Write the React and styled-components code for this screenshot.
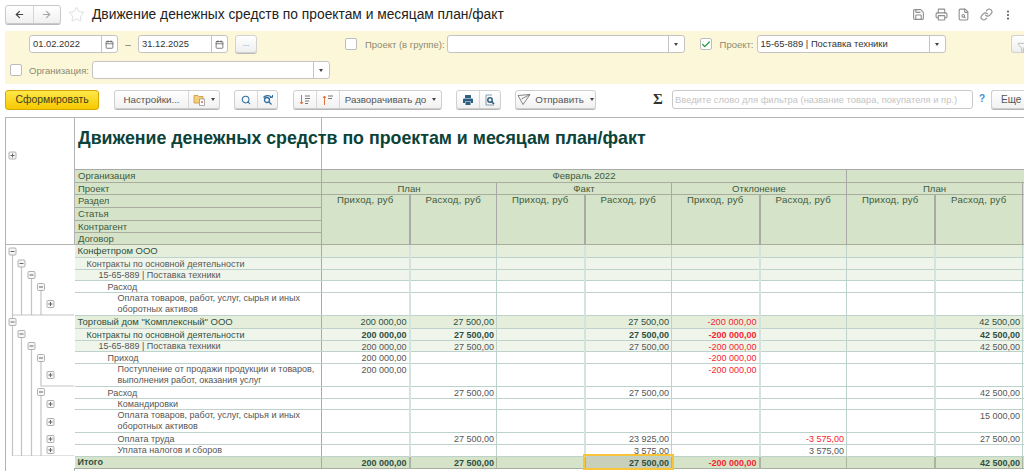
import React from "react"
import styled, { createGlobalStyle } from "styled-components"
import { ArrowLeft, ArrowRight, Star, Save, Printer, FileSearch, Link, MoreVertical, Calendar, Check, Filter, Search } from "lucide-react"

const GlobalStyle = createGlobalStyle`
    html, body {
        margin: 0;
        padding: 0;
        width: 1024px;
        height: 471px;
        overflow: hidden;
        background: #fff;
        font-family: "Liberation Sans", Arial, sans-serif;
        color: #4a4a4a;
    }
`

const Page = styled.div`
    width: 1024px;
    height: 471px;
    overflow: hidden;
    display: flex;
    flex-direction: column;
`

// top line with back/forward and the title
const TitleBar = styled.div`
    height: 31px;
    flex: none;
    display: flex;
    align-items: center;
    padding: 0 10px 2px 5px;
    box-sizing: border-box;
`
const NavGroup = styled.div`
    display: flex;
    width: 54px;
    height: 17px;
    border: 1px solid #c9c9c9;
    border-radius: 3px;
    background: linear-gradient(#fff, #f0f0f0);
    box-shadow: 0 1px 0 #bbb;
    flex: none;
`
const NavCell = styled.div`
    flex: 1;
    display: flex;
    align-items: center;
    justify-content: center;
    color: ${p => (p.$off ? "#a8a8a8" : "#444")};
    & + & { border-left: 1px solid #d4d4d4; }
`
const StarBox = styled.div`
    margin: 0 7px 0 7px;
    display: flex;
    color: #cfcfcf;
`
const PageTitle = styled.h1`
    margin: 0;
    font-size: 13.8px;
    font-weight: 400;
    color: #222;
    white-space: nowrap;
    flex: 1;
`
const TopIcons = styled.div`
    display: flex;
    gap: 9.500px;
    color: #8d8d8d;
    align-items: center;
`

// yellow filter panel
const FilterPanel = styled.div`
    height: 53px;
    flex: none;
    margin-left: 5px;
    background: #fdf7d9;
    box-sizing: border-box;
    padding: 4px 0 0 5px;
    display: flex;
    flex-direction: column;
    gap: 8px;
    overflow: hidden;
`
const FilterRow = styled.div`
    display: flex;
    align-items: center;
    height: 18px;
`
const Field = styled.div`
    width: ${p => p.$w}px;
    margin-left: ${p => p.$ml || 0}px;
    height: 18px;
    flex: none;
    box-sizing: border-box;
    display: flex;
    background: #fff;
    border: 1px solid #c4c4c4;
    border-radius: 3px;
    font-size: 9.400px;
    line-height: 16px;
    color: #333;
`
const FieldText = styled.div`
    flex: 1;
    padding-left: 3px;
    white-space: nowrap;
    overflow: hidden;
`
const FieldBtn = styled.div`
    width: 15px;
    flex: none;
    border-left: 1px solid #c4c4c4;
    display: flex;
    align-items: center;
    justify-content: center;
    color: #555;
`
const Caret = styled.span`
    width: 0;
    height: 0;
    border-left: 2.500px solid transparent;
    border-right: 2.500px solid transparent;
    border-top: 3px solid #444;
    margin-left: ${p => p.$ml || 0}px;
`
const CheckBox = styled.div`
    width: 12px;
    height: 12px;
    box-sizing: border-box;
    flex: none;
    margin-left: ${p => p.$ml || 0}px;
    border: 1px solid #bdbdbd;
    border-radius: 2px;
    background: #fff;
    display: flex;
    align-items: center;
    justify-content: center;
    color: #1f9a3c;
`
const FieldLabel = styled.div`
    font-size: 9.500px;
    color: #8a8a72;
    white-space: nowrap;
    margin: 0 2px 0 ${p => p.$ml || 8}px;
`
const Dash = styled.div`
    width: 20px;
    flex: none;
    text-align: center;
    font-size: 10px;
    color: #777;
`
const DotsBtn = styled.div`
    width: 22px;
    height: 18px;
    flex: none;
    margin-left: 7px;
    box-sizing: border-box;
    border: 1px solid #d2d2d2;
    border-radius: 3px;
    background: linear-gradient(#fff, #efefef);
    box-shadow: 0 1px 0 #bbb;
    font-size: 8px;
    line-height: 16px;
    text-align: center;
    color: #777;
`
const FunnelBtn = styled.div`
    width: 20px;
    height: 18px;
    flex: none;
    margin-left: 65px;
    box-sizing: border-box;
    border: 1px solid #d2d2d2;
    border-right: none;
    border-radius: 3px 0 0 3px;
    background: linear-gradient(#fff, #efefef);
    padding: 3px 0 0 5px;
    color: #b9b9b9;
`

// command bar
const Toolbar = styled.div`
    height: 20px;
    flex: none;
    margin-top: 6px;
    padding-left: 5px;
    display: flex;
    align-items: stretch;
`
const MainBtn = styled.div`
    width: 94px;
    box-sizing: border-box;
    border: 1px solid #d4a900;
    border-radius: 3px;
    background: linear-gradient(#ffe84a, #f6c800);
    font-size: 10.400px;
    line-height: 18px;
    text-align: center;
    color: #3d3d1a;
    flex: none;
`
const BtnGroup = styled.div`
    display: flex;
    flex: none;
    width: ${p => p.$w}px;
    margin-left: ${p => p.$ml}px;
    box-sizing: border-box;
    border: 1px solid #cfcfcf;
    border-radius: 3px;
    background: linear-gradient(#fff, #f1f1f1);
    box-shadow: 0 1px 0 #b5b5b5;
    height: 19px;
`
const BtnCell = styled.div`
    width: ${p => (p.$w ? p.$w + "px" : "auto")};
    flex: ${p => (p.$w ? "none" : 1)};
    display: flex;
    align-items: center;
    justify-content: center;
    gap: 4px;
    font-size: 9.800px;
    color: ${p => p.$ink || "#555"};
    white-space: nowrap;
    & + & { border-left: 1px solid #d8d8d8; }
`
const SigmaMark = styled.div`
    margin-left: 57px;
    width: 19px;
    flex: none;
    font-family: "Liberation Serif", serif;
    font-weight: 700;
    font-size: 15px;
    line-height: 19px;
    color: #333;
`
const SearchField = styled.div`
    width: 301px;
    height: 19px;
    flex: none;
    box-sizing: border-box;
    border: 1px solid #c9c9c9;
    border-radius: 3px;
    font-size: 9.400px;
    line-height: 17px;
    padding-left: 2px;
    color: #c4c4c4;
    white-space: nowrap;
    overflow: hidden;
`
const HelpMark = styled.div`
    width: 18px;
    flex: none;
    text-align: center;
    font-size: 10px;
    font-weight: 700;
    line-height: 18px;
    color: #3b8fd0;
`
const MoreBtn = styled.div`
    flex: none;
    width: 40px;
    height: 19px;
    box-sizing: border-box;
    border: 1px solid #cfcfcf;
    border-right: none;
    border-radius: 3px 0 0 3px;
    background: linear-gradient(#fff, #f1f1f1);
    box-shadow: 0 1px 0 #b5b5b5;
    font-size: 10px;
    line-height: 17px;
    padding-left: 9px;
    color: #555;
`

// the report itself
const ReportWrap = styled.div`
    margin: 7px 0 0 5px;
    flex: none;
    width: 1060px;
`
const Report = styled.table`
    border-collapse: collapse;
    table-layout: fixed;
    width: 1025px;
    font-size: 9px;
    line-height: 8px;
    border-top: 1px solid #b4b4b4;
    td {
        padding: 0;
        box-sizing: border-box;
        overflow: visible;
        white-space: nowrap;
    }
`
const OutlineCell = styled.td`
    border-left: 1px solid #b4b4b4;
    border-right: ${p => (p.$head ? "1px solid #b4b4b4" : "none")};
    border-bottom: ${p => (p.$head ? "1px solid #b4b4b4" : "none")};
    vertical-align: top;
    line-height: 0;
`
const SpacerCell = styled.td`
    height: ${p => p.$h}px;
    border-left: 1px solid #b4b4b4;
`
const TitleCell = styled.td`
    height: 52px;
    vertical-align: top;
    border-right: 1px solid #b4b4b4;
    border-bottom: 1px solid #a9a9a9;
    font-size: 17.800px;
    line-height: 22px;
    font-weight: 700;
    color: #0b4339;
    padding: 9px 0 0 3px !important;
`
const TitleRest = styled.td`
    border-bottom: 1px solid #a9a9a9;
`
const HeadLabel = styled.td`
    height: ${p => p.$h}px;
    background: #d5e3c8;
    border-bottom: 1px solid #a8ad9e;
    border-right: 1px solid #a9a9a9;
    font-size: 9.500px;
    line-height: 10px;
    color: #3d5a40;
    padding-left: 3px !important;
`
const HeadCell = styled.td`
    background: #d5e3c8;
    border-right: ${p => (p.$wide ? "2px" : "1px")} solid #a9a9a9;
    border-bottom: 1px solid #a8ad9e;
    text-align: center;
    vertical-align: ${p => (p.$top ? "top" : "middle")};
    color: #3d5a40;
    font-size: 9.600px;
    line-height: 10px;
    letter-spacing: ${p => (p.$top ? "0.25px" : 0)};
`
const TONES = {
    org: "#e4eedb",
    sub: "#f0f5ec",
    plain: "#fff",
    total: "#d5e3c8",
}
const NameCell = styled.td`
    background: ${p => TONES[p.$tone]};
    border-bottom: 1px solid ${p => (p.$tone === "total" ? "#a8ad9e" : "#bcd2ca")};
    border-right: 1px solid #a9a9a9;
    height: ${p => p.$h}px;
    vertical-align: middle;
    padding-left: ${p => p.$indent}px !important;
    color: ${p => (p.$dark ? "#2f4f3f" : "#555")};
    font-size: ${p => (p.$tone === "org" ? "9.500px" : "9px")};
    line-height: ${p => (p.$h > 20 ? "11px" : "10px")};
    font-weight: ${p => (p.$tone === "total" ? 700 : 400)};
`
// the selected cell gets an outline, it is painted over the grid lines
const NumCell = styled.td`
    background: ${p => (p.$active ? "#c8d0bc" : TONES[p.$tone])};
    outline: ${p => (p.$active ? "2px solid #f8c53a" : "none")};
    border-bottom: 1px solid ${p => (p.$tone === "total" ? "#a8ad9e" : "#bcd2ca")};
    border-right: ${p => (p.$wide ? "2px" : "1px")} solid ${p => {
        if (p.$tone === "total") return "#a9b5a0"
        return p.$wide ? "#d5e3df" : "#bcd2ca"
    }};
    vertical-align: top;
    text-align: right;
    padding: 2px 2px 0 0 !important;
    color: ${p => (p.$red ? "#f5252f" : p.$bold || p.$tone === "org" ? "#2f4f3f" : "#555")};
    font-weight: ${p => (p.$bold ? 700 : 400)};
    font-size: ${p => (p.$tone === "org" ? "9.200px" : "9px")};
`

const OutlineBox = ({ x, y, plus }) => (
    <g>
        <rect x={x - 3.5} y={y - 3.5} width="7" height="7" rx="1" fill="#f6f6f6" stroke="#b0b0b0" />
        <line x1={x - 2} x2={x + 2} y1={y} y2={y} stroke="#666" />
        {plus && <line x1={x} x2={x} y1={y - 2} y2={y + 2} stroke="#666" />}
    </g>
)

const TREE_LINES = [
    "M6.500 10V211H68",
    "M15.500 22V70",
    "M25.500 33V70",
    "M35 46V70",
    "M6.500 70H68",
    "M15.500 93V211",
    "M25.500 105V211",
    "M35 117V141H68",
    "M35 151V211",
]

const TREE_BOXES = [
    [6.5, 6.5], [15.5, 18.5], [25.5, 30], [35, 42], [44.5, 59, true],
    [6.5, 77], [15.5, 89], [25.5, 101], [35, 113], [44.5, 130, true],
    [35, 147], [44.5, 159, true], [44.5, 177, true], [44.5, 194, true], [44.5, 205, true],
]

// outline tree next to the data rows, y counted from the first data row
const Tree = () => (
    <svg width="68" height="211" style={{ display: "block" }}>
        {TREE_LINES.map(d => (
            <path key={d} d={d} fill="none" stroke="#c4c4c4" strokeWidth="1.2" />
        ))}
        {TREE_BOXES.map(b => <OutlineBox key={b.join()} x={b[0]} y={b[1]} plus={b[2]} />)}
    </svg>
)

const MONTHS = ["plan", "planOut", "factIn", "factOut", "devIn", "devOut", "plan2", "planOut2"]

// values per column, in the order of MONTHS
const ROWS = [
    { name: "Конфетпром ООО", tone: "org", indent: 3, h: 13, dark: true, v: [] },
    { name: "Контракты по основной деятельности", tone: "sub", indent: 12, h: 12, v: [] },
    { name: "15-65-889 | Поставка техники", tone: "sub", indent: 24, h: 11, v: [] },
    { name: "Расход", tone: "plain", indent: 33, h: 12, v: [] },
    { name: <>Оплата товаров, работ, услуг, сырья и иных<br />оборотных активов</>, tone: "plain", indent: 43, h: 23, v: [] },
    {
        name: 'Торговый дом "Комплексный" ООО', tone: "org", indent: 3, h: 13, dark: true,
        v: ["200 000,00", "27 500,00", "", "27 500,00", "-200 000,00", "", "", "42 500,00"],
    },
    {
        name: "Контракты по основной деятельности", tone: "sub", indent: 12, h: 12, bold: true,
        v: ["200 000,00", "27 500,00", "", "27 500,00", "-200 000,00", "", "", "42 500,00"],
    },
    {
        name: "15-65-889 | Поставка техники", tone: "sub", indent: 24, h: 11,
        v: ["200 000,00", "27 500,00", "", "27 500,00", "-200 000,00", "", "", "42 500,00"],
    },
    { name: "Приход", tone: "plain", indent: 33, h: 12, v: ["200 000,00", "", "", "", "-200 000,00", "", "", ""] },
    {
        name: <>Поступление от продажи продукции и товаров,<br />выполнения работ, оказания услуг</>, tone: "plain", indent: 43, h: 23,
        v: ["200 000,00", "", "", "", "-200 000,00", "", "", ""],
    },
    { name: "Расход", tone: "plain", indent: 33, h: 12, v: ["", "27 500,00", "", "27 500,00", "", "", "", "42 500,00"] },
    { name: "Командировки", tone: "plain", indent: 43, h: 11, v: [] },
    {
        name: <>Оплата товаров, работ, услуг, сырья и иных<br />оборотных активов</>, tone: "plain", indent: 43, h: 23,
        v: ["", "", "", "", "", "", "", "15 000,00"],
    },
    { name: "Оплата труда", tone: "plain", indent: 43, h: 12, v: ["", "27 500,00", "", "23 925,00", "", "-3 575,00", "", "27 500,00"] },
    { name: "Уплата налогов и сборов", tone: "plain", indent: 43, h: 11, v: ["", "", "", "3 575,00", "", "3 575,00", "", ""] },
]

const TOTAL = ["200 000,00", "27 500,00", "", "27 500,00", "-200 000,00", "", "", "42 500,00"]

const Num = ({ value, tone, bold, active, wide }) => (
    <NumCell $tone={tone} $bold={bold} $red={value.startsWith("-")} $wide={wide} $active={active}>
        {value}
    </NumCell>
)

const COLUMNS = [69, 247, 88, 87, 88, 87, 88, 87, 88, 88, 8]

export default function App() {
    return (
        <Page>
            <GlobalStyle />
            <TitleBar>
                <NavGroup>
                    <NavCell><ArrowLeft size={11} strokeWidth={2.5} /></NavCell>
                    <NavCell $off><ArrowRight size={11} strokeWidth={2.5} /></NavCell>
                </NavGroup>
                <StarBox><Star size={17} strokeWidth={1} /></StarBox>
                <PageTitle>Движение денежных средств по проектам и месяцам план/факт</PageTitle>
                <TopIcons>
                    <Save size={13} />
                    <Printer size={13} />
                    <FileSearch size={13} />
                    <Link size={13} />
                    <MoreVertical size={12} strokeWidth={2.5} style={{ color: "#666" }} />
                </TopIcons>
            </TitleBar>

            <FilterPanel>
                <FilterRow>
                    <Field $w={89} $ml={19}>
                        <FieldText>01.02.2022</FieldText>
                        <FieldBtn><Calendar size={9} /></FieldBtn>
                    </Field>
                    <Dash>–</Dash>
                    <Field $w={90}>
                        <FieldText>31.12.2025</FieldText>
                        <FieldBtn><Calendar size={9} /></FieldBtn>
                    </Field>
                    <DotsBtn>...</DotsBtn>
                    <CheckBox $ml={88} />
                    <FieldLabel>Проект (в группе):</FieldLabel>
                    <Field $w={238}>
                        <FieldText />
                        <FieldBtn><Caret /></FieldBtn>
                    </Field>
                    <CheckBox $ml={15}><Check size={11} strokeWidth={3} /></CheckBox>
                    <FieldLabel>Проект:</FieldLabel>
                    <Field $w={189} $ml={1}>
                        <FieldText>15-65-889 | Поставка техники</FieldText>
                        <FieldBtn><Caret /></FieldBtn>
                    </Field>
                    <FunnelBtn><Filter size={11} /></FunnelBtn>
                </FilterRow>
                <FilterRow>
                    <CheckBox />
                    <FieldLabel $ml={7}>Организация:</FieldLabel>
                    <Field $w={238} $ml={1}>
                        <FieldText />
                        <FieldBtn><Caret /></FieldBtn>
                    </Field>
                </FilterRow>
            </FilterPanel>

            <Toolbar>
                <MainBtn>Сформировать</MainBtn>
                <BtnGroup $w={106} $ml={15}>
                    <BtnCell>Настройки...</BtnCell>
                    <BtnCell $w={30}>
                        <svg width="14" height="13" viewBox="0 0 14 13">
                            <path d="M1 2.500h4l1 1h4v6.500H1z" fill="#f4cf7a" stroke="#c9963c" strokeWidth="0.8" />
                            <rect x="6.500" y="6" width="5" height="6.500" fill="#fff" stroke="#9a9a9a" strokeWidth="0.8" />
                            <rect x="8" y="8" width="2" height="2" fill="#d98a8a" />
                        </svg>
                        <Caret />
                    </BtnCell>
                </BtnGroup>
                <BtnGroup $w={44} $ml={14}>
                    <BtnCell $w={22} $ink="#2d6f9f"><Search size={10} strokeWidth={2.5} /></BtnCell>
                    <BtnCell $ink="#2d6f9f">
                        <svg width="12" height="12" viewBox="0 0 12 12" fill="none" stroke="currentColor" strokeWidth="1.300">
                            <circle cx="5" cy="6" r="2.500" />
                            <path d="M7 8l2.500 2.500" />
                            <path d="M1.500 3.500C3.500 1 7.500 1 9.500 3" />
                            <path d="M10.500 1v2.500H8" strokeWidth="1" />
                        </svg>
                    </BtnCell>
                </BtnGroup>
                <BtnGroup $w={149} $ml={15}>
                    <BtnCell $w={22}>
                        <svg width="12" height="12" viewBox="0 0 12 12">
                            <path d="M2.500 1v9M1 8l1.500 2L4 8" fill="none" stroke="#e0703a" />
                            <path d="M6 2h5M6 4.500h5M6 7h4M6 9.500h3" stroke="#777" />
                        </svg>
                    </BtnCell>
                    <BtnCell $w={22}>
                        <svg width="12" height="12" viewBox="0 0 12 12">
                            <path d="M2.500 11V2M1 4l1.500-2L4 4" fill="none" stroke="#e0703a" />
                            <path d="M6 2h5M6 4.500h4" stroke="#777" />
                        </svg>
                    </BtnCell>
                    <BtnCell>Разворачивать до <Caret $ml={2} /></BtnCell>
                </BtnGroup>
                <BtnGroup $w={45} $ml={14}>
                    <BtnCell $w={22} $ink="#2d5f80">
                        <svg width="12" height="12" viewBox="0 0 12 12" fill="currentColor">
                            <rect x="3" y="1" width="6" height="3" rx="0.500" />
                            <path d="M1 5.500a1 1 0 0 1 1-1h8a1 1 0 0 1 1 1V9H9V7.500H3V9H1z" />
                            <rect x="3.500" y="8" width="5" height="3" />
                        </svg>
                    </BtnCell>
                    <BtnCell $ink="#2d5f80">
                        <svg width="12" height="12" viewBox="0 0 12 12" fill="none" stroke="currentColor">
                            <path d="M8 1H2v10h8" strokeWidth="0.900" stroke="#7d93a5" />
                            <circle cx="6" cy="6" r="2.200" strokeWidth="1.500" />
                            <path d="M7.500 7.500l2.500 2.500" strokeWidth="1.700" />
                        </svg>
                    </BtnCell>
                </BtnGroup>
                <BtnGroup $w={81} $ml={14}>
                    <BtnCell>
                        <svg width="14" height="13" viewBox="0 0 14 13" fill="none" stroke="#777" strokeWidth="0.900">
                            <path d="M1 2.500L13 1.500L6 11.500Z" />
                            <path d="M13 1.500L4.500 6" />
                        </svg>
                        Отправить
                        <Caret $ml={2} />
                    </BtnCell>
                </BtnGroup>
                <SigmaMark>Σ</SigmaMark>
                <SearchField>Введите слово для фильтра (название товара, покупателя и пр.)</SearchField>
                <HelpMark>?</HelpMark>
                <MoreBtn>Еще</MoreBtn>
            </Toolbar>

            <ReportWrap>
                <Report>
                    <colgroup>
                        {COLUMNS.map((w, i) => <col key={i} style={{ width: w }} />)}
                    </colgroup>
                    <tbody>
                        <tr>
                            <OutlineCell $head rowSpan={7}>
                                <svg width="68" height="44" style={{ display: "block" }}>
                                    <OutlineBox x={6.5} y={37.5} plus />
                                </svg>
                            </OutlineCell>
                            <TitleCell>Движение денежных средств по проектам и месяцам план/факт</TitleCell>
                            <TitleRest colSpan={9} />
                        </tr>
                        <tr>
                            <HeadLabel $h={13}>Организация</HeadLabel>
                            <HeadCell colSpan={6}>Февраль 2022</HeadCell>
                            <HeadCell colSpan={3} />
                        </tr>
                        <tr>
                            <HeadLabel $h={12}>Проект</HeadLabel>
                            <HeadCell colSpan={2}>План</HeadCell>
                            <HeadCell colSpan={2}>Факт</HeadCell>
                            <HeadCell colSpan={2}>Отклонение</HeadCell>
                            <HeadCell colSpan={2}>План</HeadCell>
                            <HeadCell />
                        </tr>
                        <tr>
                            <HeadLabel $h={13}>Раздел</HeadLabel>
                            {["Приход, руб", "Расход, руб", "Приход, руб", "Расход, руб", "Приход, руб", "Расход, руб", "Приход, руб", "Расход, руб"].map((t, i) => (
                                <HeadCell key={i} rowSpan={4} $top $wide={i % 2 === 0}>{t}</HeadCell>
                            ))}
                            <HeadCell rowSpan={4} />
                        </tr>
                        <tr><HeadLabel $h={13}>Статья</HeadLabel></tr>
                        <tr><HeadLabel $h={12}>Контрагент</HeadLabel></tr>
                        <tr><HeadLabel $h={12}>Договор</HeadLabel></tr>

                        {ROWS.map((row, i) => (
                            <tr key={i}>
                                {i === 0 && (
                                    <OutlineCell rowSpan={ROWS.length}>
                                        <Tree />
                                    </OutlineCell>
                                )}
                                <NameCell $tone={row.tone} $indent={row.indent} $h={row.h} $dark={row.dark || row.bold}>
                                    {row.name}
                                </NameCell>
                                {MONTHS.map((m, j) => (
                                    <Num key={m} value={row.v[j] || ""} tone={row.tone} bold={row.bold} wide={j % 2 === 0} />
                                ))}
                                <Num value="" tone={row.tone} />
                            </tr>
                        ))}
                        <tr>
                            <OutlineCell />
                            <NameCell $tone="total" $indent={3} $h={12} $dark>Итого</NameCell>
                            {MONTHS.map((m, j) => (
                                <Num key={m} value={TOTAL[j]} tone="total" bold active={j === 3} wide={j % 2 === 0} />
                            ))}
                            <Num value="" tone="total" />
                        </tr>
                        <tr>
                            <SpacerCell $h={6} />
                            <SpacerCell $h={6} colSpan={10} />
                        </tr>
                    </tbody>
                </Report>
            </ReportWrap>
        </Page>
    )
}
